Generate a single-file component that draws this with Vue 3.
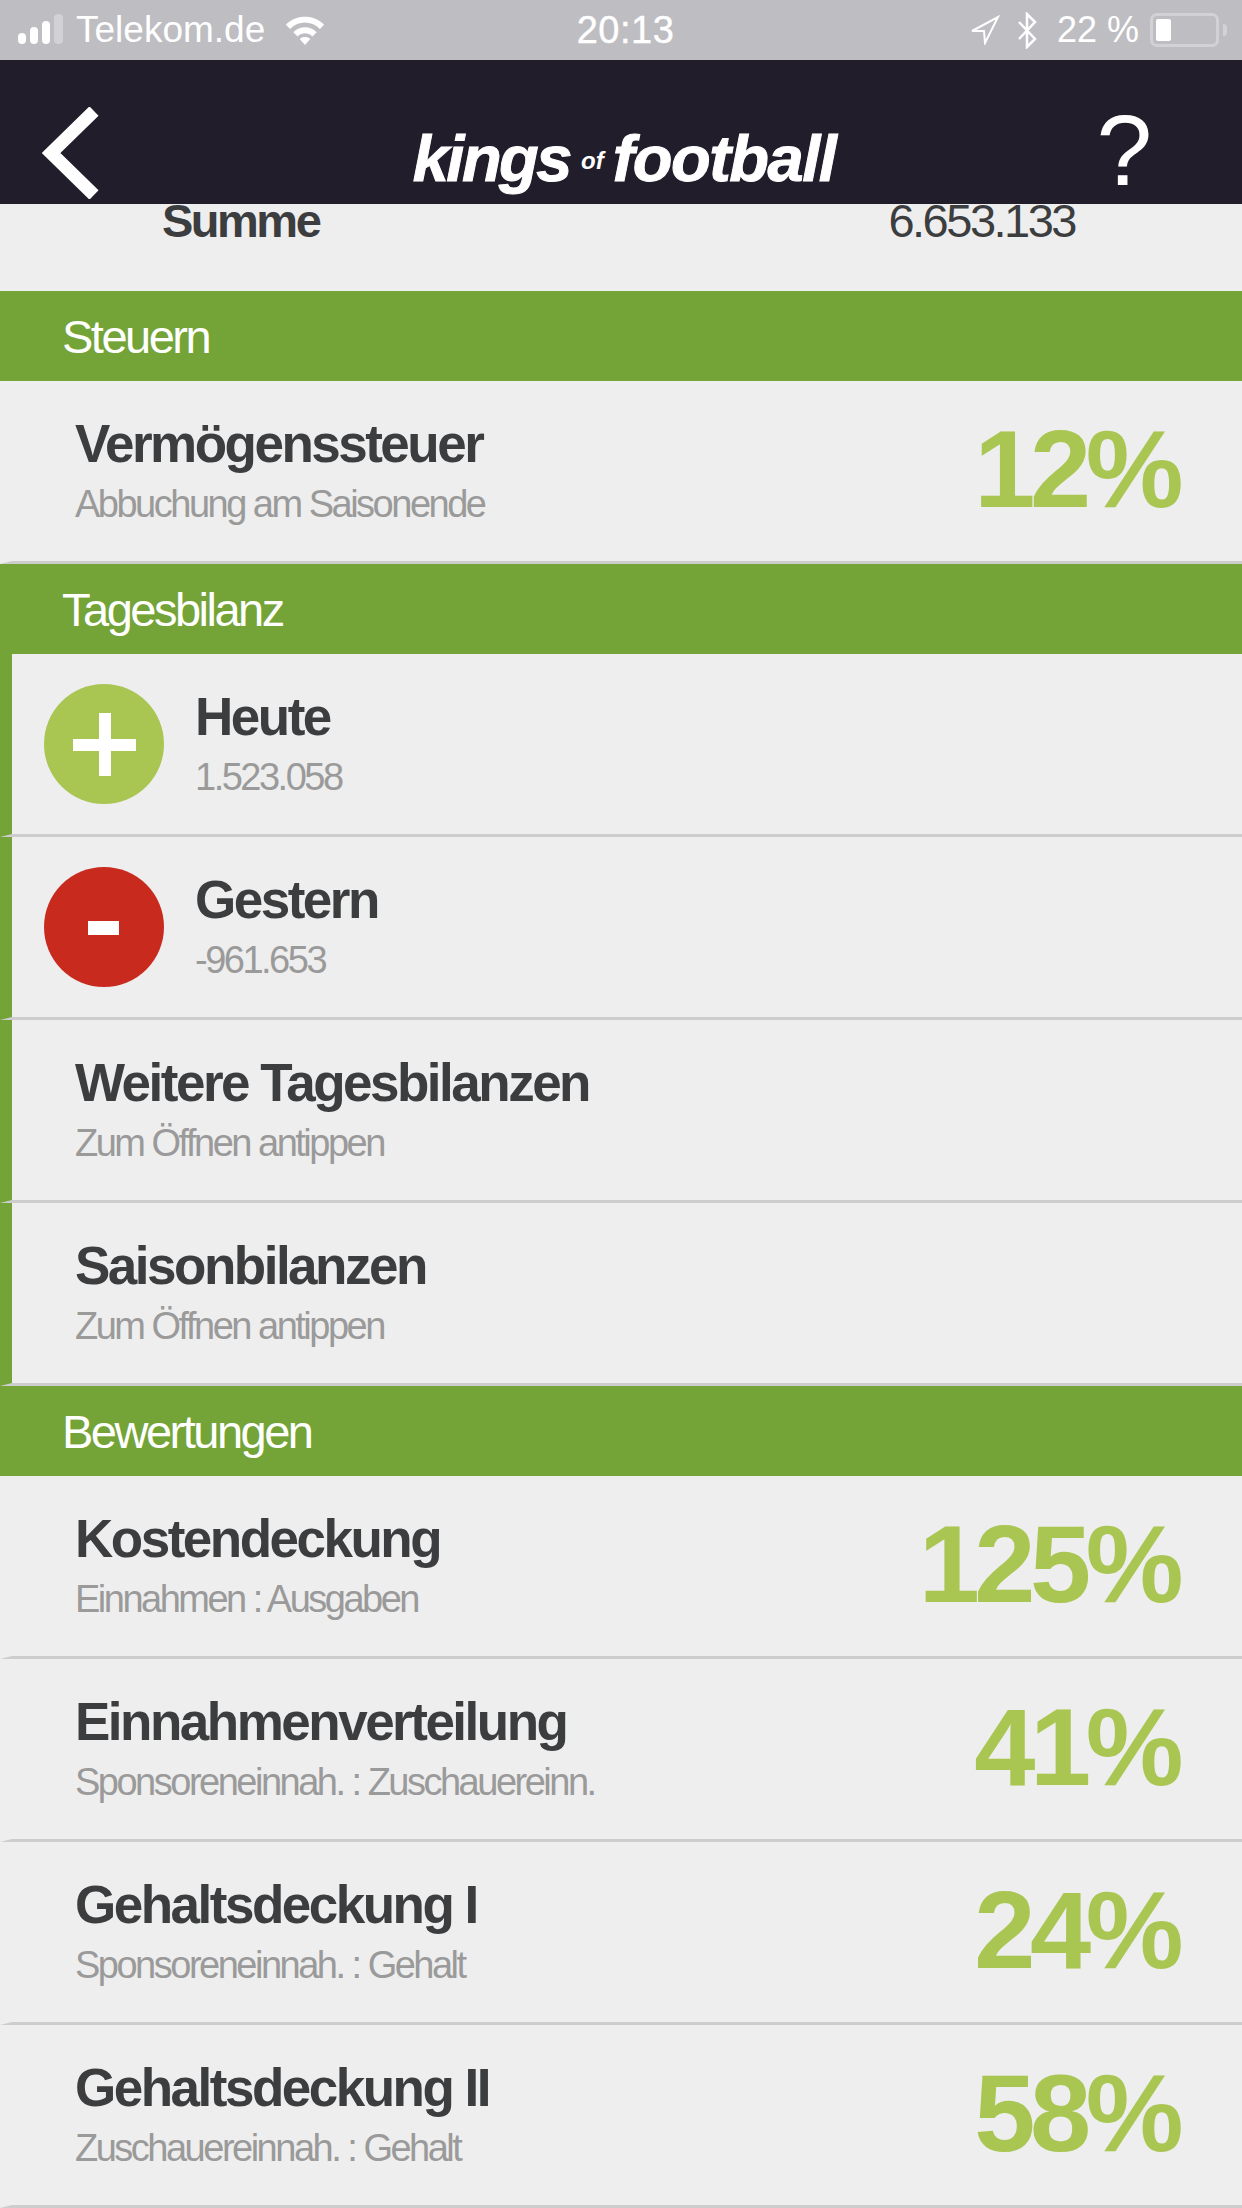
<template>
  <div class="screen">
    <div class="status-bar">
      <div class="status-left">
        <svg class="signal" width="48" height="32" viewBox="0 0 48 32">
          <rect x="0" y="19" width="8" height="11" rx="4" fill="#fff" />
          <rect x="12" y="13" width="8" height="17" rx="4" fill="#fff" />
          <rect x="24" y="7" width="8" height="23" rx="4" fill="#fff" />
          <rect x="36" y="0" width="9" height="30" rx="4" fill="#d2d2d6" />
        </svg>
        <span class="carrier">Telekom.de</span>
        <svg class="wifi" width="44" height="34" viewBox="0 0 38 32">
          <path d="M1 11 C11 1 27 1 37 11 L33 15 C25 7 13 7 5 15 Z" fill="#fff" />
          <path d="M8 18 C14 12 24 12 30 18 L26 22 C22 18 16 18 12 22 Z" fill="#fff" />
          <path d="M14 24.500 C17 22 21 22 24 24.500 L19 30 Z" fill="#fff" />
        </svg>
      </div>
      <span class="clock">20:13</span>
      <div class="status-right">
        <svg width="30" height="30" viewBox="0 0 30 30">
          <path d="M2 16 L28 2 L15 28 L14 16 Z" fill="none" stroke="#fff" stroke-width="2" />
        </svg>
        <svg class="bt" width="21" height="37" viewBox="0 0 21 37">
          <path d="M2 10 L18 27 L10 35 L10 2 L18 10 L2 27" fill="none" stroke="#fff" stroke-width="2.500" />
        </svg>
        <span class="battery-text">22 %</span>
        <div class="battery">
          <div class="battery-level"></div>
        </div>
        <div class="battery-tip"></div>
      </div>
    </div>

    <header class="nav">
      <svg class="back" width="58" height="92" viewBox="0 0 58 92">
        <path d="M52 4 L9 46 L52 88" fill="none" stroke="#fff" stroke-width="13" />
      </svg>
      <div class="logo">
        <span class="logo-kings">kings</span><span class="logo-of">of</span><span class="logo-football">football</span>
      </div>
      <span class="help">?</span>
    </header>

    <div class="summary">
      <span class="summary-label">Summe</span>
      <span class="summary-value">6.653.133</span>
    </div>

    <section v-for="section in sections" :key="section.title">
      <h2 class="section-title">{{ section.title }}</h2>
      <div
        v-for="row in section.rows"
        :key="row.title"
        class="row"
        :class="{ 'row-marked': section.marked, 'row-icon': row.icon }"
      >
        <div v-if="row.icon" class="badge" :class="`badge-${row.icon}`">
          <span class="badge-bar"></span>
          <span v-if="row.icon === 'plus'" class="badge-stem"></span>
        </div>
        <div class="row-text">
          <div class="row-title">{{ row.title }}</div>
          <div class="row-sub">{{ row.sub }}</div>
        </div>
        <div v-if="row.percent" class="percent">{{ row.percent }}%</div>
      </div>
    </section>
  </div>
</template>

<script setup>
const sections = [
  {
    title: 'Steuern',
    rows: [{ title: 'Vermögenssteuer', sub: 'Abbuchung am Saisonende', percent: '12' }]
  },
  {
    title: 'Tagesbilanz',
    marked: true,
    rows: [
      { title: 'Heute', sub: '1.523.058', icon: 'plus' },
      { title: 'Gestern', sub: '-961.653', icon: 'minus' },
      { title: 'Weitere Tagesbilanzen', sub: 'Zum Öffnen antippen' },
      { title: 'Saisonbilanzen', sub: 'Zum Öffnen antippen' }
    ]
  },
  {
    title: 'Bewertungen',
    rows: [
      { title: 'Kostendeckung', sub: 'Einnahmen : Ausgaben', percent: '125' },
      { title: 'Einnahmenverteilung', sub: 'Sponsoreneinnah. : Zuschauereinn.', percent: '41' },
      { title: 'Gehaltsdeckung I', sub: 'Sponsoreneinnah. : Gehalt', percent: '24' },
      { title: 'Gehaltsdeckung II', sub: 'Zuschauereinnah. : Gehalt', percent: '58' }
    ]
  }
]
</script>

<style>
html,
body {
  margin: 0;
  background: #eeeeee;
}
</style>

<style scoped>
.screen {
  width: 1242px;
  height: 2208px;
  overflow: hidden;
  background: #eeeeee;
  font-family: "Liberation Sans", Arial, sans-serif;
}

.status-bar {
  height: 60px;
  background: #bebdc2;
  color: #fff;
  display: grid;
  grid-template-columns: 1fr auto 1fr;
  align-items: center;
  padding: 0 15px;
  box-sizing: border-box;
  font-size: 37px;
}

.status-left {
  display: flex;
  align-items: center;
}

.signal {
  margin-left: 3px;
}

.carrier {
  margin-left: 10px;
}

.wifi {
  margin-left: 18px;
}

.clock {
  margin-left: 9px;
  font-size: 38px;
  letter-spacing: 0.5px;
  -webkit-text-stroke: 0.4px #fff;
}

.status-right {
  display: flex;
  align-items: center;
  justify-content: flex-end;
}

.bt {
  margin-left: 17px;
}

.battery-text {
  margin-left: 19px;
  font-size: 36px;
}

.battery {
  width: 69px;
  height: 34px;
  margin-left: 11px;
  border: 3px solid #d2d2d6;
  border-radius: 7px;
  box-sizing: border-box;
  padding: 3px;
}

.battery-level {
  width: 15px;
  height: 100%;
  background: #fff;
  border-radius: 2px;
}

.battery-tip {
  width: 4px;
  height: 12px;
  margin-left: 4px;
  background: #d2d2d6;
  border-radius: 0 6px 6px 0;
}

.nav {
  height: 144px;
  background: #221d2a;
  color: #fff;
  display: grid;
  grid-template-columns: 1fr auto 1fr;
  align-items: center;
  padding: 0 42px;
  box-sizing: border-box;
}

.back {
  margin-top: 42px;
}

.logo {
  margin-top: 52px;
  margin-left: 6px;
  font-size: 65px;
  font-weight: 700;
  font-style: italic;
  -webkit-text-stroke: 1px #fff;
}

.logo-kings {
  letter-spacing: -2.500px;
}

.logo-football {
  letter-spacing: -1.500px;
}

.logo-of {
  font-size: 24px;
  -webkit-text-stroke: 0;
  margin: 0 9px 0 11px;
  vertical-align: 12px;
}

.help {
  justify-self: end;
  margin-right: 48px;
  font-size: 100px;
  margin-top: 36px;
  line-height: 1;
}

.summary {
  height: 87px;
  box-sizing: border-box;
  overflow: hidden;
  display: flex;
  justify-content: space-between;
  color: #3c3d3f;
  font-size: 47px;
  line-height: 34px;
  letter-spacing: -2.500px;
  padding: 0 167px 0 162px;
}

.summary-label {
  font-weight: 700;
}

.section-title {
  margin: 0;
  height: 90px;
  background: #74a437;
  color: #fff;
  font-size: 47px;
  font-weight: 400;
  line-height: 92px;
  letter-spacing: -2.500px;
  padding-left: 62px;
}

.row {
  height: 183px;
  box-sizing: border-box;
  border-left: 12px solid #eeeeee;
  border-bottom: 3px solid #cdcdcd;
  display: flex;
  align-items: center;
  padding: 0 62px 0 63px;
}

.row-marked {
  border-left-color: #74a437;
}

.row-icon {
  padding-left: 32px;
}

.badge {
  position: relative;
  width: 120px;
  height: 120px;
  border-radius: 50%;
  flex: none;
  margin-right: 31px;
}

.badge-plus {
  background: #a9c652;
}

.badge-minus {
  background: #c92a1e;
}

.badge-bar {
  position: absolute;
  left: 29px;
  top: 55px;
  width: 63px;
  height: 12px;
  background: #fff;
}

.badge-minus .badge-bar {
  left: 44px;
  top: 54px;
  width: 31px;
  height: 14px;
}

.badge-stem {
  position: absolute;
  left: 55px;
  top: 29px;
  width: 12px;
  height: 63px;
  background: #fff;
}

.row-text {
  flex: 1;
  min-width: 0;
  padding-bottom: 3px;
}

.row-title {
  color: #3c3d3f;
  font-size: 53px;
  font-weight: 700;
  line-height: 60px;
  letter-spacing: -2.500px;
}

.row-sub {
  margin-top: 8px;
  color: #9a9a9a;
  font-size: 38px;
  line-height: 44px;
  letter-spacing: -2.500px;
}

.percent {
  color: #a9c652;
  font-size: 110px;
  font-weight: 700;
  letter-spacing: -5.500px;
  line-height: 1;
  margin-right: 2px;
  margin-bottom: 4px;
}
</style>
